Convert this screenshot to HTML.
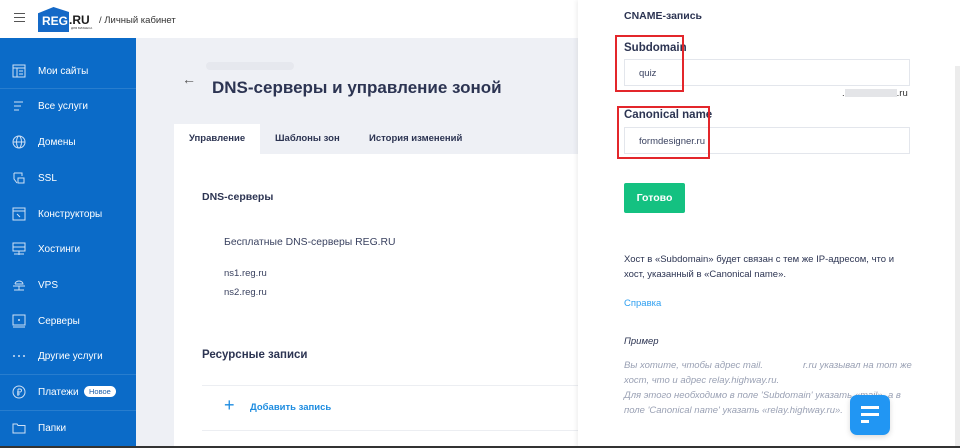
<!DOCTYPE html>
<html><head><meta charset="utf-8"><style>
*{margin:0;padding:0;box-sizing:border-box}
body{width:960px;height:448px;overflow:hidden;font-family:"Liberation Sans",sans-serif;background:#eef0f5;position:relative}
.hdr{position:absolute;left:0;top:0;width:580px;height:38px;background:#fff}
.side{position:absolute;left:0;top:38px;width:136px;height:410px;background:#0b6bc8}
.it{position:absolute;left:0;width:136px;height:36px;color:#fff;font-size:10px;display:flex;align-items:center}
.it span.t{position:absolute;left:38px}
.ic{position:absolute;left:12px;width:14px;height:14px}
.sep{position:absolute;left:0;width:136px;height:1px;background:rgba(255,255,255,.12)}
.main{position:absolute;left:136px;top:38px;width:442px;height:410px}
.panel{position:absolute;left:578px;top:0;width:382px;height:448px;background:#fff;box-shadow:-2px 0 4px rgba(0,0,0,.06)}
.lbl{position:absolute;left:46px;font-size:11.5px;font-weight:bold;color:#2c3452}
.inp{position:absolute;left:46px;width:286px;height:27px;border:1px solid #e3e6ec;font-size:9.5px;color:#3a4260;padding:8px 0 0 14px}
.red{position:absolute;border:2px solid #e3262b}
</style></head><body>
<div class="hdr">
<div style="position:absolute;left:14px;top:13px;width:11px;height:9px;border-top:1.5px solid #555;border-bottom:1.5px solid #555"><div style="margin-top:2.5px;height:1.5px;background:#555"></div></div>
<div style="position:absolute;left:38px;top:7px;width:31px;height:25px;background:#1469c7;clip-path:polygon(0 25%,50% 0,100% 20%,100% 100%,0 100%)"></div>
<div style="position:absolute;left:42px;top:14px;font-size:12px;font-weight:bold;color:#fff">REG</div>
<div style="position:absolute;left:69px;top:13px;font-size:12px;font-weight:bold;color:#1b1b1b">.RU</div>
<div style="position:absolute;left:71px;top:26px;font-size:3px;color:#333">ДЛЯ БИЗНЕСА</div>
<div style="position:absolute;left:99px;top:15px;font-size:9.5px;color:#333">/ Личный кабинет</div>
</div>
<div class="side">
<div class="it" style="top:15px"><svg class="ic" viewBox="0 0 14 14" fill="none" stroke="#cfe0f5"><rect x="1" y="1" width="12" height="12"/><path d="M1 4h12M5 4v9M7 7h4M7 10h4"/></svg><span class="t">Мои сайты</span></div>
<div class="sep" style="top:50px"></div>
<div class="it" style="top:50px"><svg class="ic" viewBox="0 0 14 14" stroke="#cfe0f5"><path d="M2 3h9M2 7h7M2 11h5"/></svg><span class="t">Все услуги</span></div>
<div class="it" style="top:86px"><svg class="ic" viewBox="0 0 14 14" fill="none" stroke="#cfe0f5"><circle cx="7" cy="7" r="6"/><ellipse cx="7" cy="7" rx="2.5" ry="6"/><path d="M1 7h12"/></svg><span class="t">Домены</span></div>
<div class="it" style="top:122px"><svg class="ic" viewBox="0 0 14 14" fill="none" stroke="#cfe0f5"><path d="M2 2h8v3M2 2v6l3 4"/><rect x="6" y="7" width="6" height="5"/></svg><span class="t">SSL</span></div>
<div class="it" style="top:158px"><svg class="ic" viewBox="0 0 14 14" fill="none" stroke="#cfe0f5"><rect x="1" y="1" width="12" height="12"/><path d="M1 4h12M5 7l3 3"/></svg><span class="t">Конструкторы</span></div>
<div class="it" style="top:193px"><svg class="ic" viewBox="0 0 14 14" fill="none" stroke="#cfe0f5"><rect x="1" y="1" width="12" height="4"/><rect x="1" y="5" width="12" height="4"/><path d="M7 9v4M2 12h10"/></svg><span class="t">Хостинги</span></div>
<div class="it" style="top:229px"><svg class="ic" viewBox="0 0 14 14" fill="none" stroke="#cfe0f5"><path d="M3 6a4 3 0 0 1 8 0H3M1 8h12M7 8v4M2 12h10"/></svg><span class="t">VPS</span></div>
<div class="it" style="top:265px"><svg class="ic" viewBox="0 0 14 14" fill="none" stroke="#cfe0f5"><rect x="1" y="1" width="12" height="10"/><path d="M1 13h12"/><circle cx="7" cy="6" r=".5"/></svg><span class="t">Серверы</span></div>
<div class="it" style="top:300px"><svg class="ic" viewBox="0 0 14 14" fill="#cfe0f5"><circle cx="2" cy="7" r="1"/><circle cx="7" cy="7" r="1"/><circle cx="12" cy="7" r="1"/></svg><span class="t">Другие услуги</span></div>
<div class="sep" style="top:336px"></div>
<div class="it" style="top:336px"><svg class="ic" viewBox="0 0 14 14" fill="none" stroke="#cfe0f5"><path d="M1 3h0"/><circle cx="7" cy="7" r="6"/><path d="M6 4v7M6 4h2a1.5 1.5 0 0 1 0 3H5M5 9h3"/></svg><span class="t">Платежи</span><span style="position:absolute;left:84px;top:12px;background:#fff;color:#1b5eaa;font-size:7.5px;border-radius:7px;padding:1px 5px">Новое</span></div>
<div class="sep" style="top:372px"></div>
<div class="it" style="top:372px"><svg class="ic" viewBox="0 0 14 14" fill="none" stroke="#cfe0f5"><path d="M1 3h4l1 1.5h7V12H1z"/></svg><span class="t">Папки</span></div>
</div>
<div class="main">
<div style="position:absolute;left:46px;top:33px;font-size:14px;color:#555">&larr;</div>
<div style="position:absolute;left:70px;top:24px;width:88px;height:8px;background:#e6e8ee;border-radius:4px"></div>
<div style="position:absolute;left:76px;top:40px;font-size:17px;font-weight:bold;color:#2c3452">DNS-серверы и управление зоной</div>
<div style="position:absolute;left:38px;top:86px;width:86px;height:30px;background:#fff"></div>
<div style="position:absolute;left:53px;top:95px;font-size:9.5px;font-weight:bold;color:#2c3452">Управление</div>
<div style="position:absolute;left:139px;top:95px;font-size:9.5px;font-weight:bold;color:#2c3452">Шаблоны зон</div>
<div style="position:absolute;left:233px;top:95px;font-size:9.5px;font-weight:bold;color:#2c3452">История изменений</div>
<div style="position:absolute;left:38px;top:116px;width:404px;height:294px;background:#fff">
<div style="position:absolute;left:28px;top:37px;font-size:10.5px;font-weight:bold;color:#2c3452">DNS-серверы</div>
<div style="position:absolute;left:50px;top:83px;font-size:10.4px;color:#3a4260">Бесплатные DNS-серверы REG.RU</div>
<div style="position:absolute;left:50px;top:114px;font-size:9.5px;color:#3a4260">ns1.reg.ru</div>
<div style="position:absolute;left:50px;top:133px;font-size:9.5px;color:#3a4260">ns2.reg.ru</div>
<div style="position:absolute;left:28px;top:195px;font-size:11.5px;font-weight:bold;color:#2c3452">Ресурсные записи</div>
<div style="position:absolute;left:28px;top:231px;width:376px;height:1px;background:#eceef2"></div>
<div style="position:absolute;left:50px;top:242px;font-size:18px;color:#1d8ce0;line-height:18px">+</div>
<div style="position:absolute;left:76px;top:248px;font-size:9.5px;font-weight:bold;color:#1d8ce0">Добавить запись</div>
<div style="position:absolute;left:28px;top:276px;width:376px;height:1px;background:#eceef2"></div>
</div>
</div>
<div class="panel">
<div style="position:absolute;left:46px;top:10px;font-size:10.5px;font-weight:bold;color:#2c3452">CNAME-запись</div>
<div class="lbl" style="top:42px">Subdomain</div>
<div class="inp" style="top:59px">quiz</div>
<div style="position:absolute;left:264px;top:88px;font-size:9.5px;color:#333">.<span style="display:inline-block;width:52px;height:8px;background:#e4e5e8;vertical-align:middle"></span>.ru</div>
<div class="lbl" style="top:109px">Canonical name</div>
<div class="inp" style="top:127px">formdesigner.ru</div>
<div class="red" style="left:37px;top:35px;width:69px;height:57px"></div>
<div class="red" style="left:39px;top:106px;width:93px;height:53px"></div>
<div style="position:absolute;left:46px;top:183px;width:61px;height:30px;background:#14c181;border-radius:2px;color:#fff;font-size:10.5px;font-weight:bold;text-align:center;line-height:30px">Готово</div>
<div style="position:absolute;left:46px;top:252px;width:290px;font-size:9.5px;line-height:15px;color:#2c3452">Хост в «Subdomain» будет связан с тем же IP-адресом, что и хост, указанный в «Canonical name».</div>
<div style="position:absolute;left:46px;top:298px;font-size:9.5px;color:#2e9ff0">Справка</div>
<div style="position:absolute;left:46px;top:336px;font-size:9.5px;font-style:italic;color:#2c3452">Пример</div>
<div style="position:absolute;left:46px;top:358px;width:290px;font-size:9.5px;font-style:italic;line-height:15px;color:#9aa1b4">Вы хотите, чтобы адрес mail.<span style="display:inline-block;width:40px"></span>r.ru указывал на тот же хост, что и адрес relay.highway.ru.<br>Для этого необходимо в поле 'Subdomain' указать «mail», а в поле 'Canonical name' указать «relay.highway.ru».</div>
<div style="position:absolute;left:272px;top:395px;width:40px;height:40px;background:#2196f3;border-radius:7px;box-shadow:0 2px 6px rgba(0,0,0,.15)"><div style="position:absolute;left:11px;top:11px;width:18px;height:3px;background:#fff"></div><div style="position:absolute;left:11px;top:18px;width:18px;height:3px;background:#fff"></div><div style="position:absolute;left:11px;top:25px;width:8px;height:3px;background:#fff"></div></div>
<div style="position:absolute;left:377px;top:66px;width:5px;height:380px;background:#ececec"></div>
</div>
<div style="position:absolute;left:0;top:446px;width:960px;height:2px;background:#333"></div>
</body></html>
